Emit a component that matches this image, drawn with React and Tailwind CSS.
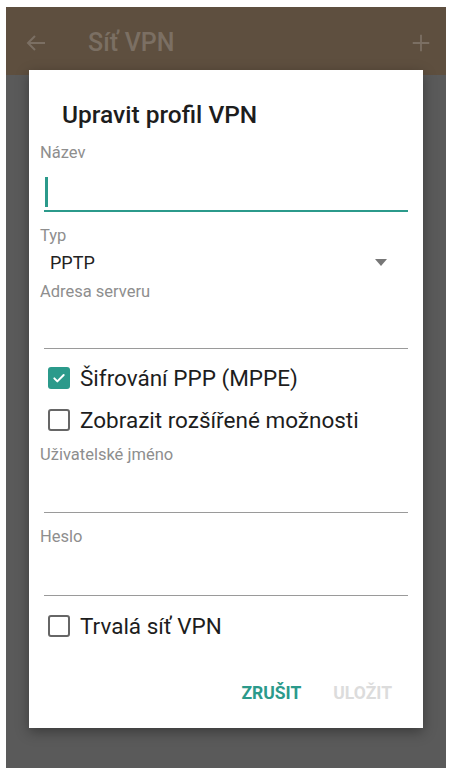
import React from 'react';

const TEAL = '#2b9a8b';

function Label({ children, className = '' }) {
  return <div className={`h-[18px] text-[16.5px] leading-[18px] text-[#8e8e8e] ${className}`}>{children}</div>;
}

function Checkbox({ checked, label, className = '' }) {
  return (
    <div className={`flex items-center h-[30px] pl-[8px] ${className}`}>
      {checked ? (
        <div className="w-[22px] h-[22px] rounded-[3px] bg-[#2b9a8b] flex items-center justify-center">
          <svg width="16" height="16" viewBox="0 0 24 24" fill="none" stroke="white" strokeWidth="3" strokeLinecap="round" strokeLinejoin="round">
            <path d="M5 12.5l4.5 4.5L19 7.5" />
          </svg>
        </div>
      ) : (
        <div className="w-[22px] h-[22px] rounded-[3px] border-2 border-[#666]" />
      )}
      <span className="ml-[10px] text-[22.5px] leading-[26px] text-[#1d1d1d]">{label}</span>
    </div>
  );
}

export default function App() {
  return (
    <div className="w-[451px] h-[770px] bg-white pt-[7px] pl-[6px] pr-[5px] pb-[2px]" style={{ fontFamily: 'Roboto, "Noto Sans", sans-serif' }}>
      <div className="relative h-full bg-[#5a5a5a]">
        <div className="h-[68px] bg-[#5e4f3f] flex items-center pt-[4px] pl-[18px] pr-[14px] text-[#7b6f63]">
          <svg width="24" height="24" viewBox="0 0 24 24" fill="none" stroke="currentColor" strokeWidth="2">
            <path d="M21 12H4M11 5l-7 7 7 7" />
          </svg>
          <span className="ml-[40px] text-[25px] font-medium">Síť VPN</span>
          <svg className="ml-auto" width="22" height="22" viewBox="0 0 24 24" fill="none" stroke="currentColor" strokeWidth="2">
            <path d="M12 3v18M3 12h18" />
          </svg>
        </div>

        <div className="absolute left-[23px] top-[63px] w-[394px] h-[658px] bg-white shadow-[0_4px_12px_rgba(0,0,0,0.35)] flex flex-col px-[11px]">
          <div className="mt-[31px] pl-[22px] h-[28px] text-[24.5px] leading-[28px] font-medium text-[#1d1d1d]">Upravit profil VPN</div>

          <Label className="mt-[15px]">Název</Label>
          <div className="h-[50px] mx-[4px] flex flex-col justify-end">
            <div className="w-[3px] h-[30px] bg-[#2b9a8b] ml-[1px] mb-[3px]" />
            <div className="h-[2px] bg-[#2b9a8b]" />
          </div>

          <Label className="mt-[15px]">Typ</Label>
          <div className="mt-[6px] h-[22px] flex items-center pl-[10px] pr-[25px]">
            <span className="text-[18px] text-[#222]">PPTP</span>
            <svg className="ml-auto" width="12" height="7" viewBox="0 0 12 7"><path d="M0 0h12L6 7z" fill="#777" /></svg>
          </div>
          <Label className="mt-[10px]">Adresa serveru</Label>
          <div className="h-[47px]" />
          <div className="mx-[4px] h-[1px] bg-[#9a9a9a]" />

          <Checkbox checked label="Šifrování PPP (MPPE)" className="mt-[14px]" />
          <Checkbox label="Zobrazit rozšířené možnosti" className="mt-[12px]" />

          <Label className="mt-[11px]">Uživatelské jméno</Label>
          <div className="h-[48px]" />
          <div className="mx-[4px] h-[1px] bg-[#9a9a9a]" />

          <Label className="mt-[15px]">Heslo</Label>
          <div className="h-[49px]" />
          <div className="mx-[4px] h-[1px] bg-[#9a9a9a]" />

          <Checkbox label="Trvalá síť VPN" className="mt-[15px]" />

          <div className="mt-[42px] h-[20px] flex items-center justify-end pr-[20px] gap-[32px] text-[17.5px] font-bold">
            <span style={{ color: TEAL }}>ZRUŠIT</span>
            <span className="text-[#dcdcdc]">ULOŽIT</span>
          </div>
        </div>
      </div>
    </div>
  );
}
